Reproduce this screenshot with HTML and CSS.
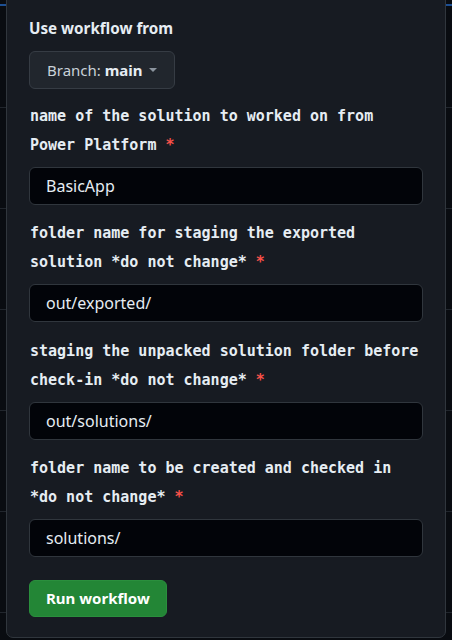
FILE: index.html
```html
<!DOCTYPE html>
<html lang="en">
<head>
<meta charset="utf-8">
<title>Run workflow</title>
<link rel="stylesheet" href="styles.css">
</head>
<body>
<div class="backdrop">
  <div class="row row-first"></div>
  <div class="row"></div>
  <div class="row"></div>
  <div class="row"></div>
  <div class="row"></div>
  <div class="row"></div>
  <div class="row row-last"></div>
</div>

<div class="panel">
  <div class="panel-title">Use workflow from</div>
  <button class="branch-btn" type="button">
    <span class="branch-label">Branch: <strong>main</strong></span>
    <span class="caret"></span>
  </button>

  <div class="fields">
    <div class="field">
      <label class="field-label">name of the solution to worked on from Power&nbsp;Platform&nbsp;<span class="req">*</span></label>
      <div class="input">BasicApp</div>
    </div>
    <div class="field">
      <label class="field-label">folder name for staging the exported solution *do not change*&nbsp;<span class="req">*</span></label>
      <div class="input">out/exported/</div>
    </div>
    <div class="field">
      <label class="field-label">staging the unpacked solution folder before check-in *do not change*&nbsp;<span class="req">*</span></label>
      <div class="input">out/solutions/</div>
    </div>
    <div class="field">
      <label class="field-label">folder name to be created and checked in *do not change*&nbsp;<span class="req">*</span></label>
      <div class="input">solutions/</div>
    </div>
  </div>

  <button class="run-btn" type="button">Run workflow</button>
</div>
</body>
</html>
```

FILE: styles.css
```css
html, body {
  margin: 0;
  padding: 0;
}

body {
  width: 452px;
  height: 640px;
  overflow: hidden;
  background: #090c11;
  position: relative;
  font-family: "Noto Sans", "Liberation Sans", sans-serif;
}

.backdrop {
  height: 640px;
  overflow: hidden;
  display: flex;
  flex-direction: column;
}

.row {
  flex: none;
  height: 101px;
  border-bottom: 1px solid #21262d;
  box-sizing: border-box;
}

.row-first {
  margin-top: 4px;
  height: 104px;
  border-top: 2px solid #1d4f93;
}

.row-last {
  flex: 1;
  height: auto;
  border-bottom: none;
}

.panel {
  position: absolute;
  left: 6px;
  right: 6px;
  top: -8px;
  bottom: 2px;
  box-sizing: border-box;
  background: #171b22;
  border: 1px solid #30363d;
  border-radius: 0 0 7px 7px;
  padding: 23px 22px 0 22px;
  display: flex;
  flex-direction: column;
  align-items: flex-start;
}

.panel-title {
  color: #e6edf3;
  font-weight: 700;
  font-size: 15.2px;
  line-height: 24px;
  height: 24px;
}

.branch-btn {
  margin-top: 11px;
  height: 37.5px;
  box-sizing: border-box;
  padding: 0 17px 0 17px;
  background: #21262d;
  border: 1px solid #363c44;
  border-radius: 6px;
  display: flex;
  align-items: center;
  font-family: inherit;
  font-size: 15px;
  color: #c9d1d9;
  cursor: pointer;
}

.branch-label strong {
  color: #e6edf3;
  font-weight: 700;
}

.caret {
  margin-left: 6px;
  width: 0;
  height: 0;
  border-left: 4px solid transparent;
  border-right: 4px solid transparent;
  border-top: 4px solid #8b949e;
  margin-top: 1px;
}

.fields {
  align-self: stretch;
  display: flex;
  flex-direction: column;
  gap: 14.3px;
  margin-top: 13.6px;
}

.field {
  display: flex;
  flex-direction: column;
}

.field-label {
  font-family: "DejaVu Sans Mono", "Liberation Mono", monospace;
  font-weight: 700;
  font-size: 15px;
  line-height: 29px;
  color: #e6edf3;
  padding-left: 1px;
  margin-bottom: 7px;
}

.req {
  color: #f85149;
}

.input {
  height: 38px;
  box-sizing: border-box;
  background: #020409;
  border: 1px solid #30363d;
  border-radius: 6px;
  padding: 0 16px;
  display: flex;
  align-items: center;
  font-size: 16px;
  color: #e6edf3;
}

.run-btn {
  margin-top: 22.7px;
  height: 37px;
  box-sizing: border-box;
  padding: 0 16px;
  background: #238636;
  border: 1px solid #2a8f3d;
  border-radius: 6px;
  color: #ffffff;
  font-family: inherit;
  font-weight: 700;
  font-size: 15px;
  cursor: pointer;
}
```
